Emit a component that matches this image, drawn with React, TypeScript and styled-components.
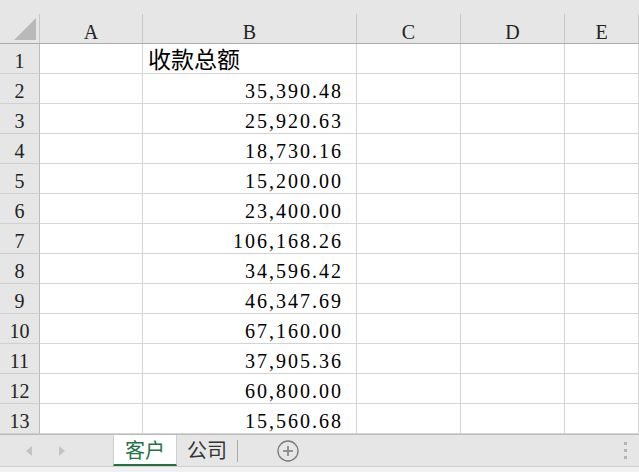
import styled, { createGlobalStyle } from "styled-components";

const GlobalStyle = createGlobalStyle`
  html, body {
    margin: 0;
    padding: 0;
    background: #ffffff;
  }
`;

const COLS = "40px 103px 214px 104px 104px 1fr";

const amounts = [
  "35,390.48",
  "25,920.63",
  "18,730.16",
  "15,200.00",
  "23,400.00",
  "106,168.26",
  "34,596.42",
  "46,347.69",
  "67,160.00",
  "37,905.36",
  "60,800.00",
  "15,560.68",
];

const letters = ["A", "B", "C", "D", "E"];

const App = () => {
  const rows = ["收款总额", ...amounts];

  return (
    <>
      <GlobalStyle />
      <Sheet>
        <TopStrip />
        <HeaderRow>
          <Corner>
            <svg width="22" height="22" viewBox="0 0 22 22">
              <polygon points="22,0 22,22 0,22" fill="#b9b9b9" />
            </svg>
          </Corner>
          {letters.map((l) => (
            <ColHead key={l}>{l}</ColHead>
          ))}
        </HeaderRow>
        <Body>
          {rows.map((value, i) => (
            <Row key={i}>
              <RowHead>{i + 1}</RowHead>
              <Cell />
              <Cell $align={i === 0 ? "left" : "right"} $cjk={i === 0}>
                {value}
              </Cell>
              <Cell />
              <Cell />
              <Cell />
            </Row>
          ))}
        </Body>
        <TabBar>
          <NavArrows>
            <svg width="8" height="12" viewBox="0 0 8 12">
              <polygon points="7,1 7,11 1,6" fill="#c4c4c4" />
            </svg>
            <svg width="8" height="12" viewBox="0 0 8 12">
              <polygon points="1,1 1,11 7,6" fill="#c4c4c4" />
            </svg>
          </NavArrows>
          <Tab $active>客户</Tab>
          <Tab>公司</Tab>
          <TabDivider />
          <AddButton>
            <svg width="22" height="22" viewBox="0 0 22 22">
              <circle cx="11" cy="11" r="10" fill="none" stroke="#7a7a7a" strokeWidth="1.3" />
              <path d="M11 6v10M6 11h10" stroke="#7a7a7a" strokeWidth="1.5" />
            </svg>
          </AddButton>
          <Spacer />
          <Dots>
            <span />
            <span />
            <span />
          </Dots>
        </TabBar>
        <BottomStrip />
      </Sheet>
    </>
  );
};

export default App;

const Sheet = styled.div`
  width: 639px;
  height: 472px;
  display: flex;
  flex-direction: column;
  overflow: hidden;
  background: #ffffff;
  font-family: "Liberation Serif", "Noto Sans CJK SC", serif;
`;

const TopStrip = styled.div`
  height: 14px;
  flex: none;
  background: #e6e6e6;
`;

const HeaderRow = styled.div`
  display: grid;
  grid-template-columns: ${COLS};
  height: 29px;
  flex: none;
  background: #e6e6e6;
  border-bottom: 1px solid #ababab;
  box-sizing: content-box;
`;

const Corner = styled.div`
  display: flex;
  align-items: flex-end;
  justify-content: flex-end;
  padding: 0 3px 3px 0;
  border-right: 1px solid #c8c8c8;
`;

const ColHead = styled.div`
  display: flex;
  align-items: center;
  justify-content: center;
  padding-top: 7px;
  border-right: 1px solid #c8c8c8;
  font-size: 20px;
  line-height: 1;
  color: #222;
`;

const Body = styled.div`
  display: flex;
  flex-direction: column;
  flex: none;
`;

const Row = styled.div`
  display: grid;
  grid-template-columns: ${COLS};
  grid-template-rows: 30px;
  height: 30px;
  box-sizing: border-box;
  overflow: hidden;
`;

const RowHead = styled.div`
  display: flex;
  align-items: center;
  justify-content: center;
  box-sizing: border-box;
  padding-top: 5px;
  background: #e6e6e6;
  border-right: 1px solid #bdbdbd;
  border-bottom: 1px solid #cfcfcf;
  font-size: 20px;
  line-height: 1;
  color: #222;
`;

const Cell = styled.div<{ $align?: "left" | "right"; $cjk?: boolean }>`
  display: flex;
  align-items: center;
  justify-content: ${(p) => (p.$align === "left" ? "flex-start" : "flex-end")};
  box-sizing: border-box;
  padding: ${(p) => (p.$cjk ? "3px 0 0 5px" : "4px 13px 0 0")};
  border-right: 1px solid #d4d4d4;
  border-bottom: 1px solid #d4d4d4;
  font-size: ${(p) => (p.$cjk ? "23px" : "20px")};
  line-height: 1;
  letter-spacing: ${(p) => (p.$cjk ? "0" : "2px")};
  color: #000;
  white-space: nowrap;
  overflow: hidden;
`;

const TabBar = styled.div`
  flex: 1;
  display: flex;
  align-items: stretch;
  background: #e6e6e6;
  border-top: 1px solid #bdbdbd;
  min-height: 0;
`;

const NavArrows = styled.div`
  width: 113px;
  display: flex;
  align-items: center;
  gap: 25px;
  padding-left: 25px;
  box-sizing: border-box;
`;

const Tab = styled.div<{ $active?: boolean }>`
  display: flex;
  align-items: center;
  justify-content: center;
  height: 29px;
  padding: 0 ${(p) => (p.$active ? "11px" : "10px")};
  background: ${(p) => (p.$active ? "#ffffff" : "transparent")};
  border-bottom: 2px solid ${(p) => (p.$active ? "#217346" : "transparent")};
  color: ${(p) => (p.$active ? "#217346" : "#333")};
  font-family: "Noto Sans CJK SC", sans-serif;
  font-size: 20px;
  ${(p) => p.$active && "border-right: 1px solid #d0d0d0; border-left: 1px solid #d0d0d0;"}
`;

const TabDivider = styled.div`
  width: 1px;
  background: #a8a8a8;
  margin: 5px 0 4px 0;
`;

const AddButton = styled.div`
  display: flex;
  align-items: center;
  padding-left: 39px;
`;

const Spacer = styled.div`
  flex: 1;
`;

const Dots = styled.div`
  display: flex;
  flex-direction: column;
  justify-content: center;
  gap: 4px;
  padding-right: 12px;

  & span {
    width: 3px;
    height: 3px;
    background: #b4b4b4;
  }
`;

const BottomStrip = styled.div`
  height: 5px;
  flex: none;
  background: #f0f0f0;
  border-top: 1px solid #cfcfcf;
`;
